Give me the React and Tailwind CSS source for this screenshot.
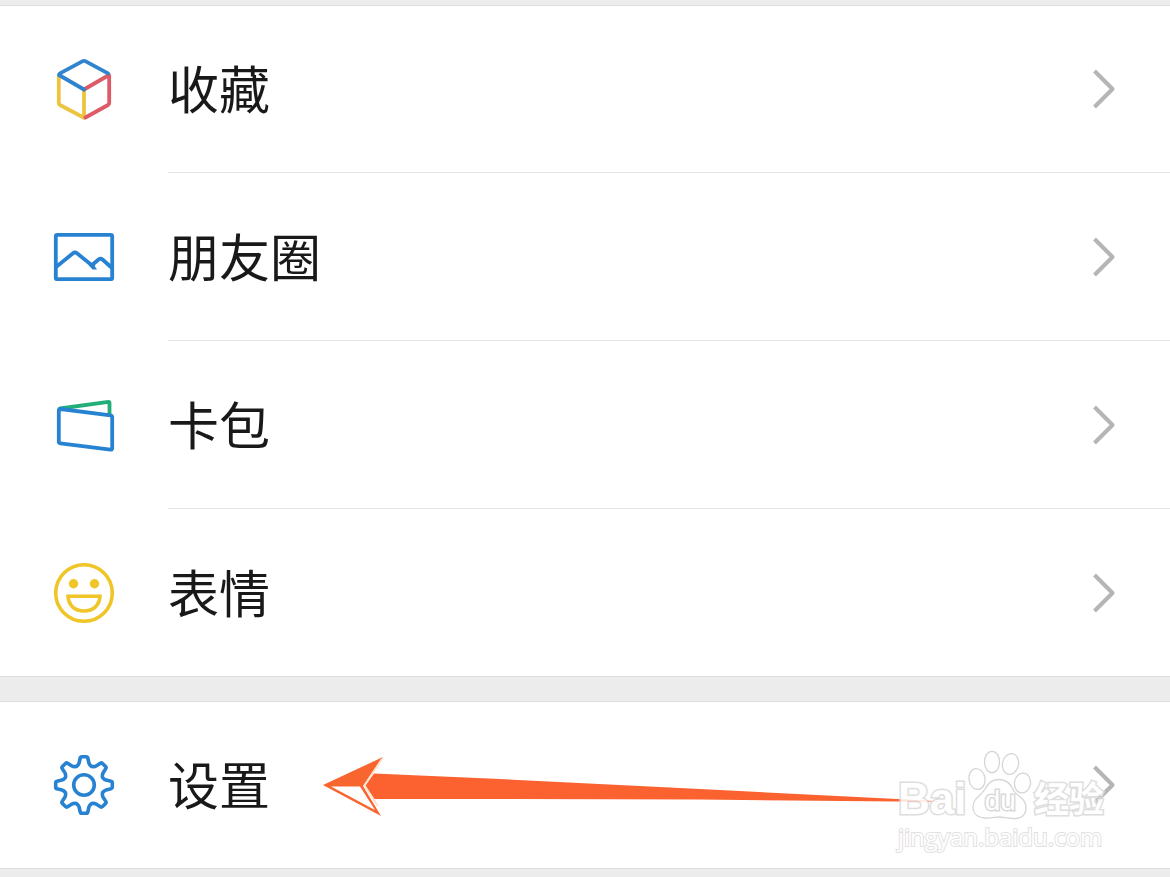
import React from 'react';

const BLUE = '#2782d2';

function FavoritesIcon() {
  return (
    <svg viewBox="0 0 64 64" className="size-16" fill="none" strokeWidth="3.8" strokeLinejoin="round" strokeLinecap="round" aria-hidden="true">
      <path d="M6.800 17.500V45q0 1.300 1.200 2L32 59.800V32" stroke="#ecc440" />
      <path d="M57.200 17.500V45q0 1.300 -1.200 2L33.500 59.500M32 31.500L57 17" stroke="#dc5b66" />
      <path d="M32 31.500L7 17q0 -1 1 -1.600L30.700 3.200q1.300 -.7 2.600 0L56 15.400" stroke="#2f83cf" />
    </svg>
  );
}

function MomentsIcon() {
  return (
    <svg viewBox="0 0 64 64" className="size-16" fill="none" stroke={BLUE} strokeWidth="3.8" strokeLinejoin="round" aria-hidden="true">
      <rect x="3.800" y="9.800" width="56.400" height="44.400" rx="1.500" />
      <path d="M4 42L21 28.300q2 -1.600 4 0L42 42M39 41L46.500 34.500q2 -1.600 4 0L60 43" />
      <path d="M36.500 40L40.500 44.400H45L42 40Z" fill={BLUE} stroke="none" />
    </svg>
  );
}

function CardsIcon() {
  return (
    <svg viewBox="0 0 64 64" className="size-16" fill="none" strokeWidth="3.800" strokeLinejoin="round" strokeLinecap="round" aria-hidden="true">
      <path d="M8 15.500L56.500 8.800q1 0 1 1V21" stroke="#22ae78" />
      <path d="M8.500 16L58.500 22.300q1.700 .3 1.700 2V55q0 1.800 -1.700 1.600L8.300 50.300q-1.500 -.2 -1.500 -1.800V17.500q0 -1.700 1.700 -1.500Z" stroke={BLUE} />
    </svg>
  );
}

function StickersIcon() {
  return (
    <svg viewBox="0 0 64 64" className="size-16" fill="none" stroke="#f0c528" strokeWidth="3.600" strokeLinejoin="miter" aria-hidden="true">
      <circle cx="32" cy="32" r="28.300" />
      <g fill="#f0c528" stroke="none">
        <circle cx="21.500" cy="22.800" r="4.700" />
        <circle cx="42.500" cy="22.800" r="4.700" />
      </g>
      <path d="M16 35.200H48C47.500 44.500 41 50 32 50S16.500 44.500 16 35.200Z" />
    </svg>
  );
}

const TEETH = [0, 45, 90, 135, 180, 225, 270, 315];

function gearPath() {
  const at = (deg, x, y) => {
    const a = (deg * Math.PI) / 180;
    return `${(32 + x * Math.cos(a) - y * Math.sin(a)).toFixed(2)} ${(32 + x * Math.sin(a) + y * Math.cos(a)).toFixed(2)}`;
  };
  return TEETH.map((deg, i) => [
    `${i ? 'L' : 'M'}${at(deg, -4.900, -22)}`,
    `L${at(deg, -3.800, -27)}`,
    `Q${at(deg, -3.500, -28.300)} ${at(deg, -2.200, -28.300)}`,
    `L${at(deg, 2.200, -28.300)}`,
    `Q${at(deg, 3.500, -28.300)} ${at(deg, 3.800, -27)}`,
    `L${at(deg, 4.900, -22)}`,
    `Q${at(deg, 5.300, -20.300)} ${at(deg + 22.500, 0, -20)}`,
    `Q${at(deg + 45, -5.300, -20.300)} ${at(deg + 45, -4.900, -22)}`,
  ].join('')).join('') + 'Z';
}

function SettingsIcon() {
  return (
    <svg viewBox="0 0 64 64" className="size-16" fill="none" stroke={BLUE} strokeWidth="3.600" strokeLinejoin="round" aria-hidden="true">
      <path d={gearPath()} />
      <circle cx="32" cy="32" r="10.300" />
    </svg>
  );
}

function Chevron() {
  return (
    <svg viewBox="0 0 24 40" className="h-10 w-6 shrink-0" fill="none" stroke="#b5b5b5" strokeWidth="4" strokeLinejoin="round" aria-hidden="true">
      <path d="M2.500 2L20.500 20L2.500 38" />
    </svg>
  );
}

function Row({ icon, label, last }) {
  return (
    <li className={`h-[168px] ${last ? 'border-b border-[#dedede]' : ''}`}>
      <a href="#" className="flex h-full items-stretch">
        <span className="flex w-[168px] shrink-0 items-center pl-[52px]">{icon}</span>
        <span className={`flex min-w-0 flex-1 items-center justify-between pr-[54px] ${last ? '' : 'border-b border-[#e3e3e3]'}`}>
          <span className="pb-1 text-[51px] leading-[72px]">{label}</span>
          <Chevron />
        </span>
      </a>
    </li>
  );
}

function PointerArrow() {
  return (
    <svg viewBox="0 0 620 64" className="pointer-events-none absolute top-[52px] left-[322px] h-16 w-[620px]" aria-hidden="true">
      <path d="M52 20.500L178 26L378 36L575 46L620 48.500L575 48.500L378 46.500L178 46L52 46L43 33Z" fill="#fb6230" />
      <path d="M1 32L61 4L41 33L59 63Z" fill="#f9652f" />
      <path d="M9 33.500L38 33.500L53 57Z" fill="#fff" />
      <path d="M60 6L42.500 32.500L56 53" fill="none" stroke="#ffe3cf" strokeWidth="2" />
    </svg>
  );
}

function Watermark() {
  return (
    <div className="pointer-events-none absolute right-[66px] bottom-4 w-[206px] text-white opacity-80">
      <div className="flex h-[72px] items-end justify-between">
        <span className="font-['Liberation_Sans',sans-serif] text-[44px] leading-[44px] font-bold [-webkit-text-stroke:3px_#d6d6d6] [paint-order:stroke_fill]">Bai</span>
        <span className="relative flex h-[72px] w-16 items-end justify-center">
          <svg viewBox="0 0 64 72" className="absolute inset-0 h-[72px] w-16" fill="#fff" stroke="#cccccc" strokeWidth="1.300" aria-hidden="true">
            <ellipse cx="9" cy="30" rx="8" ry="10.500" transform="rotate(-8 9 30)" />
            <ellipse cx="24" cy="13" rx="7.500" ry="10.700" />
            <ellipse cx="42.500" cy="15" rx="8" ry="10.500" transform="rotate(12 42.500 15)" />
            <ellipse cx="54.500" cy="34" rx="8" ry="10" transform="rotate(8 54.500 34)" />
            <path d="M31 30.500C39 30.500 43 35 46 42C50 48 58 49 58 59C58 67 52 70 45 69.500C38 69 35 68 31 68C27 68 24 69.500 17 69C9 68.500 5 64 5 58C5 49 13 47 17 40C20 34 24 30.500 31 30.500Z" />
          </svg>
          <span className="relative font-['Liberation_Sans',sans-serif] text-[28px] leading-[40px] [-webkit-text-stroke:3px_#d0d0d0] [paint-order:stroke_fill]">du</span>
        </span>
        <span className="text-[35px] leading-[48px] font-bold [-webkit-text-stroke:3px_#d6d6d6] [paint-order:stroke_fill]">经验</span>
      </div>
      <div className="font-['Open_Sans',sans-serif] text-[24px] leading-[32px] font-normal [-webkit-text-stroke:2px_#dadada] [paint-order:stroke_fill]">jingyan.baidu.com</div>
    </div>
  );
}

export default function App() {
  return (
    <main lang="zh-CN" className="min-h-screen bg-[#ececec] pt-[5px] font-['Noto_Sans_CJK_SC',sans-serif] text-[#191919]">
      <ul className="bg-white [&>li:first-child]:border-t [&>li:first-child]:border-[#dedede]">
        <Row icon={<FavoritesIcon />} label="收藏" />
        <Row icon={<MomentsIcon />} label="朋友圈" />
        <Row icon={<CardsIcon />} label="卡包" />
        <Row icon={<StickersIcon />} label="表情" last />
      </ul>
      <div className="relative mt-6">
        <ul className="bg-white [&>li:first-child]:border-t [&>li:first-child]:border-[#dedede]">
          <Row icon={<SettingsIcon />} label="设置" last />
        </ul>
        <PointerArrow />
        <Watermark />
      </div>
    </main>
  );
}
